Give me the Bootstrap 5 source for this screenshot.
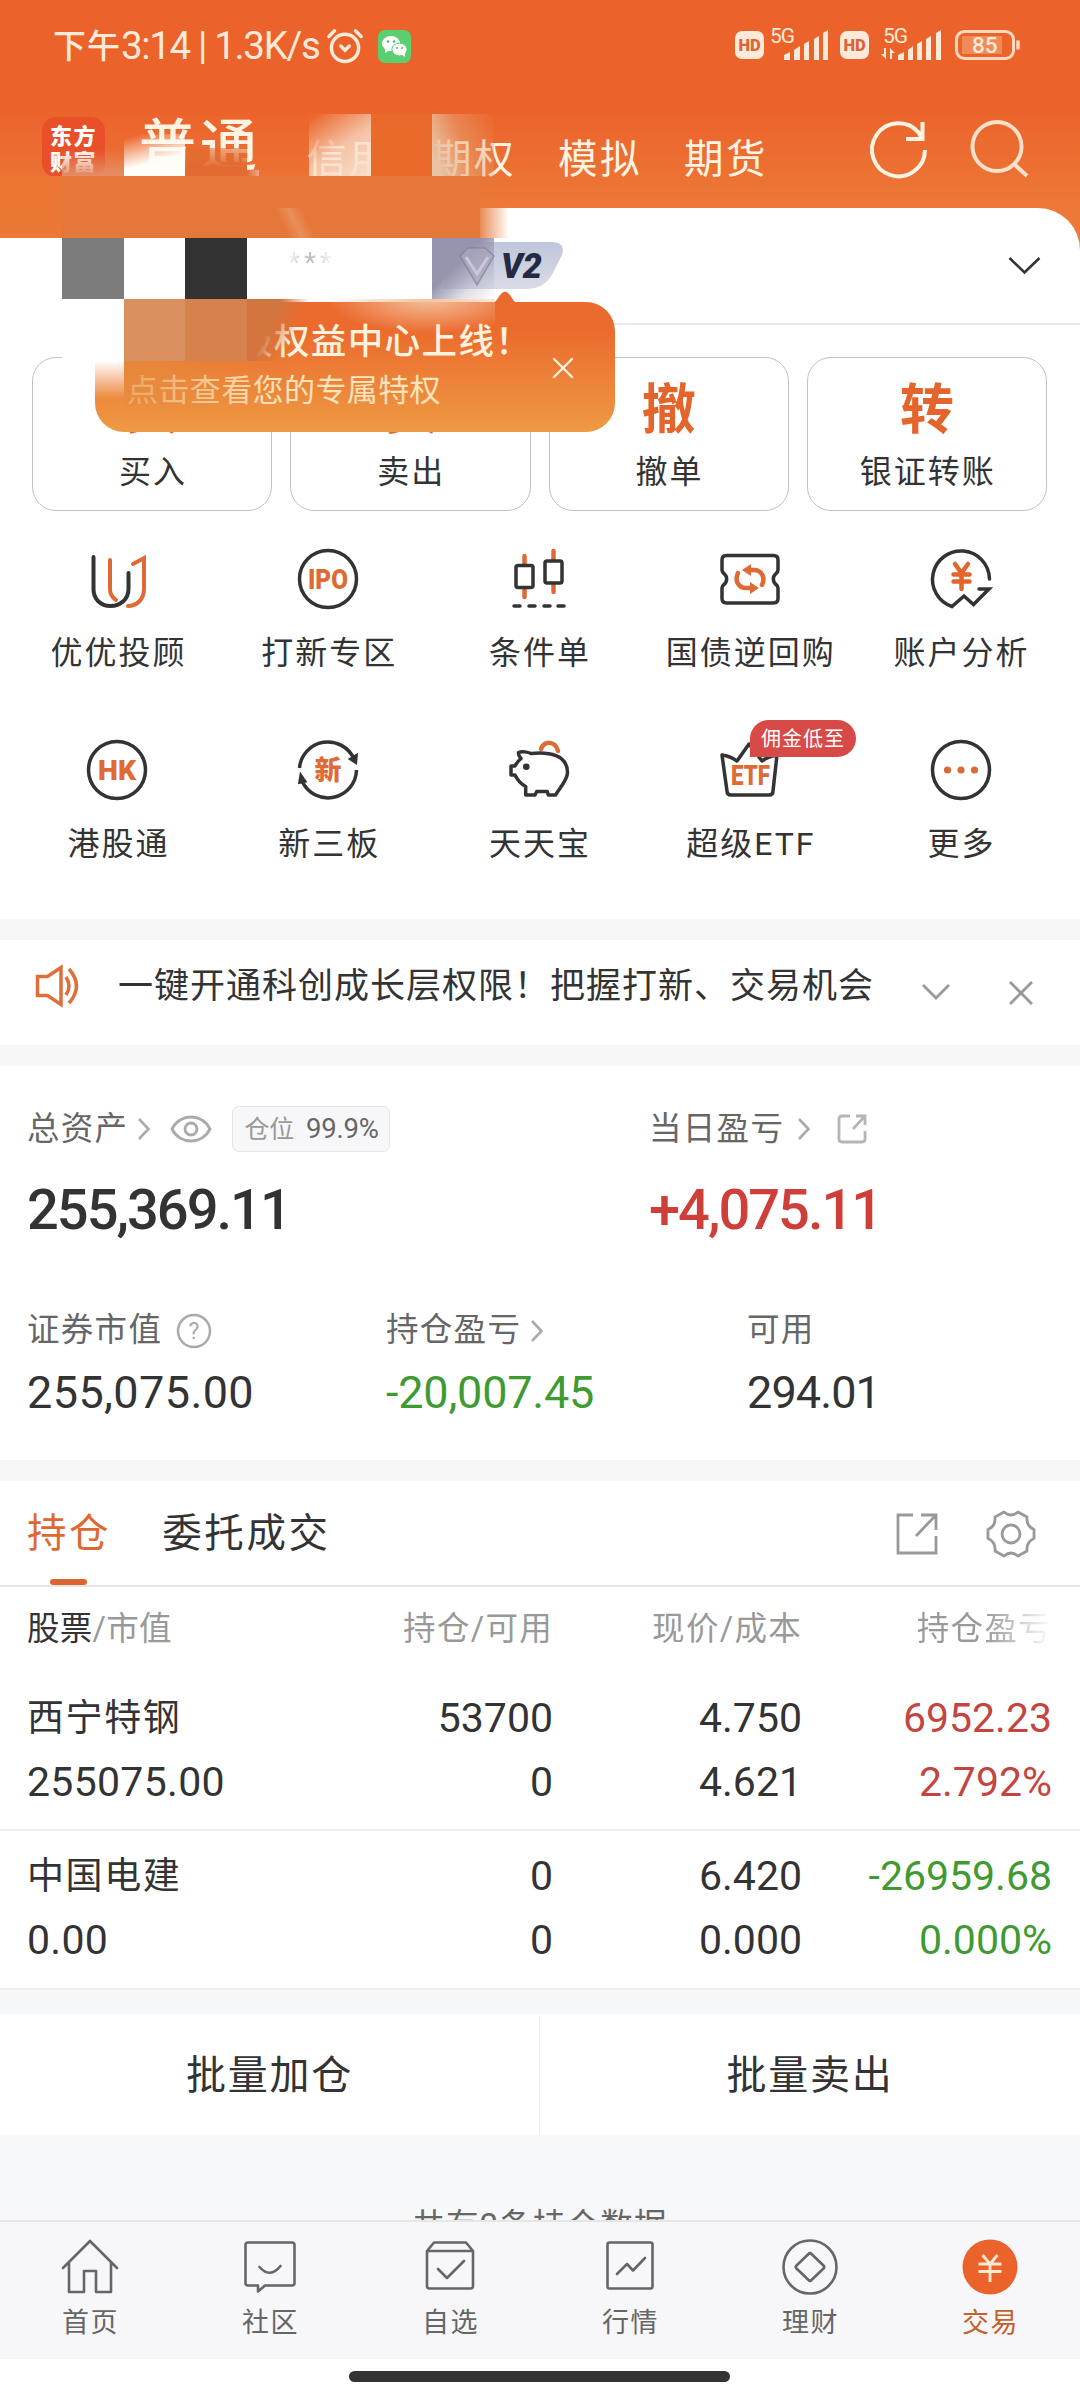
<!DOCTYPE html>
<html lang="zh-CN">
<head>
<meta charset="utf-8">
<meta name="viewport" content="width=device-width, initial-scale=1">
<title>交易</title>
<link href="https://cdn.jsdelivr.net/npm/bootstrap@5.3.0/dist/css/bootstrap.min.css" rel="stylesheet">
<style>
:root{--ink:#333;--brand:#e5642b;--soft:#f7f7fa}
html,body{width:1080px;height:2400px;overflow:hidden}
body{font-family:Roboto,"Noto Sans CJK SC",sans-serif;color:var(--ink);line-height:1;background:#fff}
svg{display:block;fill:none;flex:none;overflow:visible}
.screen{width:1080px;height:2400px}
.top-bg{background:linear-gradient(#eb622b 0,#eb622b 105px,#ed7837 205px,#ed7533 100%)}
.status{height:92px;padding:0 59px 0 53px;color:#ffe9d8}
.status-txt{font-size:38.5px;letter-spacing:-1.35px;white-space:pre}
.status-cn{font-size:33px;letter-spacing:1px;font-weight:500}
.toptabs{height:116px;color:#fff3e2;padding-left:42px;font-size:39.5px;letter-spacing:2.5px;white-space:nowrap}
.logo-tile{width:63px;height:60px;border-radius:14px;background:#e9502a;color:#fff;font:900 22px/26px "Noto Sans CJK SC",sans-serif;letter-spacing:1.5px;margin-top:25px}
.tab-main{font-size:57px;letter-spacing:4px;font-weight:500;width:168px;margin:26px 0 0 34px}
.tab-sub{margin-top:48px}
.sheet{border-top-right-radius:42px;height:711px}
.acct{height:117px;border-bottom:2px solid #e9e9e9;padding-right:39px}
.vbadge{left:432px;top:242px;width:131px;height:47px}
.quick{padding:32px 33px 0 32px;gap:18px}
.quick-card{height:154px;border:1.5px solid #c2c2c2;border-radius:24px;flex:1 1 0;padding-top:25px}
.quick-glyph{font-size:54px;font-weight:700;color:var(--brand);line-height:56px}
.lbl{font-size:32px;letter-spacing:2px;text-indent:2px}
.quick .lbl{margin-top:17px}
.tools{padding:0 14px 0 12px;grid-template-columns:repeat(5,1fr)}
.tool{height:191px;padding-top:36px}
.tool .lbl{margin-top:26px}
.fee-tag{left:750px;top:720px;width:106px;height:37px;background:#d74a47;border-radius:19px 19px 19px 0;color:#fff;font-size:20px;letter-spacing:1px}
.band{height:21px;background:var(--soft)}
.notice{height:105px;padding:0 46px 0 35px;font-size:35px;letter-spacing:1px}
.g6{color:#666}.g9{color:#999}
.cap{font-size:32.5px;letter-spacing:1.3px}
.pos-pill{height:46px;width:158px;border:1.5px solid #e4e4e6;border-radius:7px;background:var(--soft);font-size:27.5px;letter-spacing:-.2px;margin-left:20px;padding-left:11px}
.big-num{font-size:56px;font-weight:500;letter-spacing:-2px}
.mid-num{font-size:45px}
.up{color:#cf3f39}.down{color:#3f9a31}
.pos-row .up{color:#c4453f}
.assets{height:394px}
.tabs-row{height:106px;border-bottom:2px solid #e6e6e6;padding:2px 44px 0 27px;font-size:39.5px;letter-spacing:2.6px}
.tab-on{color:#e0672f}
.tab-on::after{content:"";position:absolute;left:23px;width:37px;height:6px;bottom:0;border-radius:3px;background:#dd6331}
.thead-row{height:85px;padding:0 28px 0 27px}
.pos-row{height:157px;padding:26px 28px 0 27px;font-size:41px}
.pos-row+.pos-row{border-top:2px solid #efefef;height:159px;padding-top:25px}
.ln{height:64px}
.c1{width:300px;letter-spacing:.3px}.c2{width:226px;text-align:right}.c3{width:249px;text-align:right}.c4{width:250px;text-align:right}
.pos-row .stock{font-size:37px;letter-spacing:1.6px;padding-top:2px}
.fade-txt{background:linear-gradient(90deg,#999 0,#999 50%,#fff 100%);-webkit-background-clip:text;color:transparent}
.batch{height:121px;font-size:40px;letter-spacing:1.8px;padding-top:3px}
.batch-mid{border-right:1px solid #eee}
.batch-gap{height:26px;background:#f6f7f9;border-top:2px solid #efefef}
.foot-note{height:85px;background:#f7f8fa;padding-top:75px;overflow:hidden;font-size:32.5px;letter-spacing:1.2px;color:#666}
.botnav{height:139px;background:var(--soft);border-top:2px solid #e6e6e6;padding-top:15px}
.botnav .nlbl{font-size:27px;letter-spacing:1.5px;text-indent:1px;margin-top:13px}
.homebar{width:381px;height:11px;border-radius:6px;background:#333;margin:12px auto 0;position:relative;right:1px}
.tip{left:95px;top:302px;width:520px;height:130px;border-radius:29px;background:linear-gradient(#eb6a2e 0,#eb6b2e 22%,#ee9a43 100%);color:#fff3df}
.tip-arrow{left:398px;top:-11px}
.tip-1{left:142px;top:23px;font-size:35.5px;letter-spacing:1.4px;font-weight:500}
.tip-2{left:32px;top:73px;font-size:31px;letter-spacing:.4px;color:#ffe3bc}
.tip-x{left:457px;top:55px}
.mz{position:absolute}
.m1{left:62px;top:150px;width:62px;height:26px;background:linear-gradient(rgba(231,140,103,0),#e58d67)}
.m2{left:124px;top:134px;width:61px;height:42px;background:linear-gradient(165deg,rgba(255,253,248,0) 8%,#fffdf8 62%)}
.m3{left:185px;top:148px;width:62px;height:28px;background:linear-gradient(rgba(227,107,46,.55),#e26a31 70%)}
.m3b{left:247px;top:170px;width:12px;height:6px;background:linear-gradient(90deg,#e36c33,#eda98a)}
.m4{left:309px;top:114px;width:62px;height:62px;background:linear-gradient(145deg,#eb682c 5%,rgba(248,223,203,.75) 52%,#f8dfcb)}
.m5{left:371px;top:114px;width:61px;height:62px;background:#ea6a2c}
.m6{left:432px;top:114px;width:62px;height:62px;background:linear-gradient(70deg,#e8c3a5 10%,rgba(231,167,123,.5) 50%,rgba(235,107,45,.15))}
.m7{left:62px;top:176px;width:418px;height:62px;background:#e57738}
.m7t{left:480px;top:176px;width:30px;height:8px;background:linear-gradient(90deg,rgba(229,119,56,.6),rgba(229,119,56,0))}
.m7l{left:0;top:176px;width:62px;height:62px;background:linear-gradient(#ed7433,#ea7836)}
.m7r{left:475px;top:208px;width:34px;height:30px;background:linear-gradient(90deg,#e57738,rgba(255,255,255,0))}
.m7s{left:275px;top:208px;width:40px;height:30px;background:linear-gradient(65deg,transparent 25%,#e88f5b 50%,transparent 75%)}
.m8{left:62px;top:238px;width:62px;height:61px;background:#7c7c7c}
.m9{left:185px;top:238px;width:62px;height:61px;background:#333}
.stars{left:288px;top:249px;font-size:28px;letter-spacing:4px;background:linear-gradient(90deg,#f6f6f6,#bbb 45%,#f4f4f4 90%);-webkit-background-clip:text;color:transparent}
.m10{left:432px;top:238px;width:62px;height:61px;background:linear-gradient(135deg,#9795ae 42%,rgba(151,149,174,.3) 72%,rgba(255,255,255,0))}
.m0{left:0;top:299px;width:95px;height:32px;background:#fff}
.m11{left:62px;top:299px;width:62px;height:100px;background:linear-gradient(#fff 62%,rgba(255,255,255,0))}
.m12{left:124px;top:299px;width:61px;height:62px;background:#da905f}
.m13{left:185px;top:299px;width:62px;height:62px;background:#d7824d}
.m14{left:247px;top:299px;width:62px;height:62px;background:linear-gradient(115deg,#d3753e 38%,rgba(211,117,62,0) 70%)}
.m15{left:290px;top:299px;width:205px;height:34px;background:radial-gradient(ellipse 50% 100% at 68% 0,#f4c19b,rgba(240,150,95,0))}
.m16{left:124px;top:361px;width:150px;height:44px;background:linear-gradient(90deg,rgba(229,141,61,.65) 10%,rgba(229,141,61,0))}
</style>
<script src="https://cdn.jsdelivr.net/npm/bootstrap@5.3.0/dist/js/bootstrap.bundle.min.js"></script>
</head>
<body>
<div class="screen position-relative d-flex flex-column">

  <div class="top-bg">
    <div class="status d-flex align-items-center justify-content-between">
      <div class="d-flex align-items-center">
        <span class="status-cn">下午</span><span class="status-txt">3:14 | 1.3K/s</span>
        <svg style="margin-left:6px" width="38" height="38" viewBox="0 0 40 38" stroke="#ffe9d8" stroke-width="3.600" stroke-linecap="round"><circle cx="20" cy="21" r="14.300"/><path d="M3 9 9 3M37 9 31 3M15.500 19l4.500 4.500 4.500-4.500"/></svg>
        <svg style="margin-left:14px" width="33" height="33" viewBox="0 0 33 33"><rect width="33" height="33" rx="7" fill="#5bcf70"/><g fill="#fff"><ellipse cx="13" cy="13.500" rx="9" ry="7.500"/><path d="M7 18v5l5-3z"/><ellipse cx="21.500" cy="19.500" rx="7.600" ry="6.400" stroke="#5bcf70" stroke-width="1"/><path d="M23 24l4 3v-5z"/></g><g fill="#4cb95f"><circle cx="10" cy="11.500" r="1.200"/><circle cx="16" cy="11.500" r="1.200"/><circle cx="19" cy="18" r="1"/><circle cx="24" cy="18" r="1"/></g></svg>
      </div>
      <svg width="286" height="36" viewBox="0 0 286 36" font-family="Roboto, sans-serif">
        <g fill="#ffe9d8">
          <rect x="0" y="3" width="29" height="28" rx="7"/><rect x="105" y="3" width="29" height="28" rx="7"/>
          <path d="M49 32v-5l6-3v8zM59 32V22l6-4v14zM69 32V16l5-3v19zM79 32V11l5-3v24zM88 32V5l5-3v30zM163 32v-5l6-3v8zM173 32V22l5-4v14zM182 32V16l5-3v19zM191 32V11l5-3v24zM201 32V5l5-3v30zM151 20v11l-5-5h3v-6zM155 31V20l5 5h-3v6z"/>
          <text x="35" y="14.500" font-size="21" textLength="25">5G</text><text x="148" y="14.500" font-size="21" textLength="25">5G</text>
        </g>
        <g fill="#d9663b" font-size="16.500" font-weight="900"><text x="3.500" y="23">HD</text><text x="108.500" y="23">HD</text></g>
        <rect x="221.500" y="3.500" width="57" height="27" rx="8" stroke="#ffd9bd" stroke-width="3"/><rect x="227" y="8" width="40" height="18" fill="#f08a57"/><path d="M283 12.500v9" stroke="#ffd9bd" stroke-width="3.500"/>
        <text x="237" y="25" font-size="22.500" font-weight="500" fill="#ffe9d8">85</text>
      </svg>
    </div>
    <div class="toptabs d-flex align-items-start">
      <div class="logo-tile text-center pt-1">东方<br>财富</div>
      <div class="tab-main">普通</div>
      <div class="tab-sub" style="width:84px">信用</div>
      <div class="tab-sub" style="width:84px;margin-left:41px">期权</div>
      <div class="tab-sub" style="width:84px;margin-left:42px">模拟</div>
      <div class="tab-sub" style="width:84px;margin-left:42px">期货</div>
      <svg style="margin:28px 0 0 101px" width="60" height="60" viewBox="0 0 60 60" stroke="#fff3e2" stroke-width="4"><path d="M56 30a26.500 26.500 0 1 1-6-17L53 19M53.500 2v17H37"/></svg>
      <svg style="margin:26px 0 0 39px" width="62" height="62" viewBox="0 0 62 62" stroke="#ffe0c8" stroke-width="4"><circle cx="29" cy="28.500" r="24.500"/><path d="m46 46 13 12"/></svg>
    </div>
    <div class="sheet bg-white">
      <div class="acct d-flex align-items-center justify-content-end">
        <svg width="33" height="20" viewBox="0 0 33 20" stroke="#333" stroke-width="2.600"><path d="M1.500 2 16.500 16.500 31.500 2"/></svg>
      </div>
      <div class="quick d-flex text-center">
        <div class="quick-card"><div class="quick-glyph">买</div><div class="lbl">买入</div></div>
        <div class="quick-card"><div class="quick-glyph">卖</div><div class="lbl">卖出</div></div>
        <div class="quick-card"><div class="quick-glyph">撤</div><div class="lbl">撤单</div></div>
        <div class="quick-card"><div class="quick-glyph">转</div><div class="lbl">银证转账</div></div>
      </div>
      <div class="tools d-grid">
        <div class="tool d-flex flex-column align-items-center">
          <svg width="64" height="64" viewBox="0 0 64 64" stroke-width="4" stroke-linecap="round"><path d="M8.500 10v32c0 10 7 17 17 17s18-7 18-17V26" stroke="#333"/><path d="M25 13v29c0 5 3 9 6 11M48 17l11-6v31c0 10-7 17-16 17" stroke="#de6a35"/></svg>
          <div class="lbl">优优投顾</div></div>
        <div class="tool d-flex flex-column align-items-center">
          <svg width="64" height="64" viewBox="0 0 64 64"><circle cx="32" cy="32" r="28.500" stroke="#333" stroke-width="3.500"/><text x="32" y="42" text-anchor="middle" textLength="40" lengthAdjust="spacingAndGlyphs" font-size="28" font-weight="900" fill="#de6a35">IPO</text></svg>
          <div class="lbl">打新专区</div></div>
        <div class="tool d-flex flex-column align-items-center">
          <svg width="64" height="64" viewBox="0 0 64 64" stroke-width="3.500" stroke-linecap="round"><path d="M17.500 9v9M17.500 42v8M46.500 4v9M46.500 37v8" stroke="#de6a35" stroke-width="4.500"/><rect x="9" y="18.500" width="17" height="22" rx="2" stroke="#333"/><rect x="38" y="14" width="17" height="22" rx="2" stroke="#333"/><path d="M7 59h6M22 59h6M37 59h6M51 59h6" stroke="#333"/></svg>
          <div class="lbl">条件单</div></div>
        <div class="tool d-flex flex-column align-items-center">
          <svg width="64" height="64" viewBox="0 0 64 64" stroke="#333" stroke-width="3.500"><path d="M8.500 8.500h47q4.500 0 4.500 4.500v10q0 2-2 3.500a7 7 0 0 0 0 11q2 1.500 2 3.500v10.500q0 4.500-4.500 4.500h-47q-4.500 0-4.500-4.500V41q0-2 2-3.500a7 7 0 0 0 0-11Q4 25 4 23V13q0-4.500 4.500-4.500z"/><path d="M20 26c-4 8 1 15 8 15h5M44 38c4-8-1-15-8-15h-5" stroke="#de6a35" stroke-width="4.500" stroke-linecap="round"/><path d="m24 23 9-6v12zM41 41l-9-6v12z" fill="#de6a35" stroke="none"/></svg>
          <div class="lbl">国债逆回购</div></div>
        <div class="tool d-flex flex-column align-items-center">
          <svg width="64" height="64" viewBox="0 0 64 64" stroke="#333" stroke-width="3.500"><path d="M60.500 32A28.500 28.500 0 1 0 23 59.500L35 49l9.500 8.500L60 42H50" stroke-linecap="round"/><path d="m26 17 6.500 9 6.500-9M32.500 26v16M24.500 27.500h16M24.500 34.500h16" stroke="#e5642b" stroke-width="4.500" stroke-linecap="round"/></svg>
          <div class="lbl">账户分析</div></div>
        <div class="tool d-flex flex-column align-items-center">
          <svg width="64" height="64" viewBox="0 0 64 64"><circle cx="32" cy="32" r="28.500" stroke="#333" stroke-width="3.500"/><text x="32" y="42" text-anchor="middle" textLength="38" lengthAdjust="spacingAndGlyphs" font-size="28" font-weight="900" fill="#de6a35">HK</text></svg>
          <div class="lbl">港股通</div></div>
        <div class="tool d-flex flex-column align-items-center">
          <svg width="64" height="64" viewBox="0 0 64 64" stroke="#333" stroke-width="3.500"><path d="M3.500 30A28.500 28.500 0 0 1 58 21M60.500 32A28.500 28.500 0 0 1 6 43"/><path d="m55 21 4.500 3 .5-6zM4 44l1-6 3.500 5z" fill="#333"/><text x="32" y="42" text-anchor="middle" font-size="27" font-weight="900" fill="#de6a35" stroke="none">新</text></svg>
          <div class="lbl">新三板</div></div>
        <div class="tool d-flex flex-column align-items-center">
          <svg width="64" height="64" viewBox="0 0 64 64" stroke="#333" stroke-width="3.500" stroke-linejoin="round"><path d="M34 11C37 3 48 2 51 13" stroke="#de6a35" stroke-width="4.500" stroke-linecap="round"/><path d="M11.500 14.500C15 13 21 14 24 15.500 42 13.500 60.500 17 60.500 34.500 60.500 42 54 48 48.500 57H41.300L40.300 53.500H29.700L28 57H18.700V48.500C12 45 10 41 8 37H4V28H8C9.500 25 11 23 14 20.500 12.500 18.500 11 17 11.500 14.500z"/><circle cx="19.300" cy="28.700" r="3.300" fill="#333" stroke="none"/></svg>
          <div class="lbl">天天宝</div></div>
        <div class="tool d-flex flex-column align-items-center">
          <svg width="64" height="64" viewBox="0 0 64 64"><path d="M4 17q8 1 15 6L31 6l13 17q7-5 15-6l-4 36q0 4-4 4H13q-4 0-4-4z" stroke="#333" stroke-width="3.500" stroke-linejoin="round"/><text x="32.500" y="47" text-anchor="middle" textLength="39" lengthAdjust="spacingAndGlyphs" font-size="28" font-weight="900" fill="#de6a35">ETF</text></svg>
          <div class="lbl">超级ETF</div></div>
        <div class="tool d-flex flex-column align-items-center">
          <svg width="64" height="64" viewBox="0 0 64 64"><circle cx="32" cy="32" r="28.500" stroke="#333" stroke-width="3.500"/><g fill="#d96a36"><circle cx="18.500" cy="32" r="3.600"/><circle cx="32" cy="32" r="3.600"/><circle cx="45.500" cy="32" r="3.600"/></g></svg>
          <div class="lbl">更多</div></div>
      </div>
    </div>
  </div>

  <div class="band"></div>
  <div class="notice d-flex align-items-center">
    <svg style="margin-top:-13px" width="48" height="42" viewBox="0 0 48 42" stroke="#df6f3a" stroke-width="3.500"><path d="M2.500 11.500h10L26 2.500v37l-13.500-9h-10zM31 12q6 9 0 18M34 4q15 17 0 34"/></svg>
    <span style="margin:-13px 0 0 35px">一键开通科创成长层权限！把握打新、交易机会</span>
    <svg class="ms-auto" width="30" height="18" viewBox="0 0 30 18" stroke="#999" stroke-width="2.800"><path d="m2 1 13 13L28 1"/></svg>
    <svg style="margin-left:57px" width="26" height="26" viewBox="0 0 26 26" stroke="#999" stroke-width="2.800"><path d="m2 2 22 22M24 2 2 24"/></svg>
  </div>
  <div class="band"></div>

  <div class="assets" style="padding-left:27px">
    <div class="d-flex" style="padding-top:40px">
      <div style="width:622px">
        <div class="d-flex align-items-center" style="height:46px">
          <span class="cap g6">总资产</span>
          <svg style="margin-left:9px" width="14" height="24" viewBox="0 0 14 24" stroke="#aaa" stroke-width="2.600"><path d="m2 2 9.500 10L2 22"/></svg>
          <svg style="margin-left:19px" width="42" height="28" viewBox="0 0 42 28" stroke="#aaa" stroke-width="2.800"><path d="M2 14C10-2 32-2 40 14 32 30 10 30 2 14z"/><circle cx="21" cy="14" r="6"/></svg>
          <div class="pos-pill d-flex align-items-center g6"><span class="g9" style="font-size:25px;margin-right:12px">仓位</span>99.9%</div>
        </div>
      </div>
      <div class="d-flex align-items-center">
        <span class="cap g6">当日盈亏</span>
        <svg style="margin-left:13px" width="14" height="24" viewBox="0 0 14 24" stroke="#aaa" stroke-width="2.600"><path d="m2 2 9.500 10L2 22"/></svg>
        <svg style="margin-left:25px" width="32" height="32" viewBox="0 0 32 32" stroke="#b5b5b5" stroke-width="2.800"><path d="M14 3H6q-3 0-3 3v20q0 3 3 3h20q3 0 3-3V18M20 3h9v9M29 3 17 16"/></svg>
      </div>
    </div>
    <div class="d-flex big-num" style="padding-top:30px"><div style="width:622px">255,369.11</div><div class="up">+4,075.11</div></div>
    <div class="d-flex align-items-center cap g6" style="padding-top:66px;height:119px">
      <div class="d-flex align-items-center" style="width:359px">证券市值<svg style="margin-left:14px" width="36" height="36" viewBox="0 0 36 36"><circle cx="18" cy="18" r="16" stroke="#aaa" stroke-width="2.500"/><text x="18" y="26" text-anchor="middle" font-size="23" fill="#aaa" letter-spacing="0">?</text></svg></div>
      <div class="d-flex align-items-center" style="width:361px">持仓盈亏<svg style="margin-left:9px" width="14" height="24" viewBox="0 0 14 24" stroke="#aaa" stroke-width="2.600"><path d="m2 2 9.500 10L2 22"/></svg></div>
      <div>可用</div>
    </div>
    <div class="d-flex mid-num" style="padding-top:13px"><div style="width:359px;letter-spacing:.4px">255,075.00</div><div class="down" style="width:361px;letter-spacing:-.2px">-20,007.45</div><div style="letter-spacing:-.9px">294.01</div></div>
  </div>
  <div class="band"></div>

  <div class="tabs-row d-flex align-items-stretch">
    <div class="tab-on position-relative d-flex align-items-center">持仓</div>
    <div class="d-flex align-items-center" style="margin-left:51px">委托成交</div>
    <svg class="ms-auto align-self-center" width="44" height="44" viewBox="0 0 44 44" stroke="#999" stroke-width="2.800"><path d="M18 3H3v38h38V24M26 3h15v15M41 3 21 24"/></svg>
    <svg class="align-self-center" style="margin-left:47px" width="50" height="50" viewBox="0 0 50 50" stroke="#999" stroke-width="2.800" stroke-linejoin="round"><path d="M18 3q7 6 14 0l9 5q-1 9 7 12.500v9Q40 33 41 42l-9 5q-7-6-14 0l-9-5q1-9-7-12.500v-9Q10 17 9 8z"/><circle cx="25" cy="25" r="9"/></svg>
  </div>

  <div class="thead-row cap g9 d-flex align-items-center">
    <div class="c1"><span style="color:#333">股票</span>/市值</div><div class="c2">持仓/可用</div><div class="c3">现价/成本</div><div class="c4"><span class="fade-txt">持仓盈亏</span></div>
  </div>
  <div class="pos-row">
    <div class="ln d-flex"><div class="c1 stock">西宁特钢</div><div class="c2">53700</div><div class="c3">4.750</div><div class="c4 up">6952.23</div></div>
    <div class="ln d-flex"><div class="c1">255075.00</div><div class="c2">0</div><div class="c3">4.621</div><div class="c4 up">2.792%</div></div>
  </div>
  <div class="pos-row">
    <div class="ln d-flex"><div class="c1 stock">中国电建</div><div class="c2">0</div><div class="c3">6.420</div><div class="c4 down">-26959.68</div></div>
    <div class="ln d-flex"><div class="c1">0.00</div><div class="c2">0</div><div class="c3">0.000</div><div class="c4 down">0.000%</div></div>
  </div>

  <div class="batch-gap"></div>
  <div class="batch d-flex text-center">
    <div class="w-50 d-flex align-items-center justify-content-center batch-mid">批量加仓</div>
    <div class="w-50 d-flex align-items-center justify-content-center">批量卖出</div>
  </div>
  <div class="foot-note text-center">共有2条持仓数据</div>

  <div class="botnav row row-cols-6 g-0 g6">
    <div class="col d-flex flex-column align-items-center"><svg width="60" height="60" viewBox="0 0 60 60" stroke="#666" stroke-width="2.600" stroke-linecap="round" stroke-linejoin="round"><path d="M3 31 30 4l27 27M9 26v29h15V34h12v21h15V26"/></svg><div class="nlbl">首页</div></div>
    <div class="col d-flex flex-column align-items-center"><svg width="60" height="60" viewBox="0 0 60 60" stroke="#666" stroke-width="2.600" stroke-linecap="round" stroke-linejoin="round"><path d="M8 5.500h44q2.500 0 2.500 2.500v38q0 2.500-2.500 2.500H25l-7 6v-6H8q-2.500 0-2.500-2.500V8Q5.500 5.500 8 5.500zM19.500 30q10.500 12 21-1"/></svg><div class="nlbl">社区</div></div>
    <div class="col d-flex flex-column align-items-center"><svg width="60" height="60" viewBox="0 0 60 60" stroke="#666" stroke-width="2.600" stroke-linecap="round" stroke-linejoin="round"><path d="M7 14 14 5.500h32l7 8.500v35q0 2.500-2.500 2.500h-41Q7 51.500 7 49zM7 14h46M18 32l9 9 17-17"/></svg><div class="nlbl">自选</div></div>
    <div class="col d-flex flex-column align-items-center"><svg width="60" height="60" viewBox="0 0 60 60" stroke="#666" stroke-width="2.600" stroke-linecap="round" stroke-linejoin="round"><rect x="7.500" y="5.500" width="45" height="46" rx="2"/><path d="m17 37 10-10 6 6.500L45 21"/></svg><div class="nlbl">行情</div></div>
    <div class="col d-flex flex-column align-items-center"><svg width="60" height="60" viewBox="0 0 60 60" stroke="#666" stroke-width="2.600" stroke-linejoin="round"><circle cx="30" cy="30" r="26.500"/><path d="m28.500 17-12 11.500q-1.500 1.500 0 3l12 11.500q1.500 1.500 3 0l12-11.500q1.500-1.500 0-3L31.500 17q-1.500-1.500-3 0z"/></svg><div class="nlbl">理财</div></div>
    <div class="col d-flex flex-column align-items-center" style="color:#c4602e"><svg width="60" height="60" viewBox="0 0 60 60"><circle cx="30" cy="30" r="27.500" fill="#eb622b"/><path d="m22.500 18 7.500 9 7.500-9M30 27v18M18.500 27h23M18.500 34.500h23" stroke="#ffe9d0" stroke-width="2.800"/></svg><div class="nlbl">交易</div></div>
  </div>
  <div class="homebar"></div>

  <!-- membership badge and promo tooltip above the account row -->
  <svg class="position-absolute vbadge" viewBox="0 0 131 47"><defs><linearGradient id="vb" x1="0" y1="0" x2="0" y2="1"><stop offset="0" stop-color="#bfc5dc"/><stop offset="1" stop-color="#d9dce6"/></linearGradient></defs><path d="M30 0h89q15 0 11 13l-9 18q-8 16-27 16H10z" fill="url(#vb)"/></svg>
  <i class="mz m10"></i>
  <svg class="position-absolute vbadge" viewBox="0 0 131 47"><path d="m28 14 8-8h17l9 8-17 29z" fill="#a9a6bf" fill-opacity=".7" stroke="#857f9c" stroke-opacity=".7" stroke-width="1.500"/><path d="m34 15 11 17 11-17" stroke="#c9c7da" stroke-width="3"/><text x="69" y="36" font-size="35" font-weight="900" font-style="italic" textLength="41" lengthAdjust="spacingAndGlyphs" fill="#242a3f">V2</text></svg>
  <i class="mz m0"></i>
  <div class="position-absolute tip">
    <svg class="position-absolute tip-arrow" width="24" height="12" viewBox="0 0 24 12"><path d="M0 12Q3 11 7 4q5-7 10 0 4 7 7 8z" fill="#e96a2e"/></svg>
    <div class="position-absolute tip-1 text-nowrap">级权益中心上线！</div>
    <div class="position-absolute tip-2 text-nowrap">点击查看您的专属特权</div>
    <svg class="position-absolute tip-x" width="22" height="22" viewBox="0 0 22 22" stroke="#fff3df" stroke-width="2.400" stroke-linecap="round"><path d="m2 2 18 18M20 2 2 20"/></svg>
  </div>
  <div class="position-absolute fee-tag d-flex align-items-center justify-content-center">佣金低至</div>

  <!-- privacy mosaic -->
  <i class="mz m1"></i><i class="mz m2"></i><i class="mz m3"></i><i class="mz m3b"></i><i class="mz m4"></i><i class="mz m5"></i><i class="mz m6"></i>
  <i class="mz m7l"></i><i class="mz m7"></i><i class="mz m7s"></i><i class="mz m7t"></i><i class="mz m7r"></i>
  <i class="mz m8"></i><i class="mz m9"></i><span class="mz stars">***</span>
  <i class="mz m11"></i><i class="mz m12"></i><i class="mz m13"></i><i class="mz m14"></i><i class="mz m15"></i><i class="mz m16"></i>
</div>
</body>
</html>
